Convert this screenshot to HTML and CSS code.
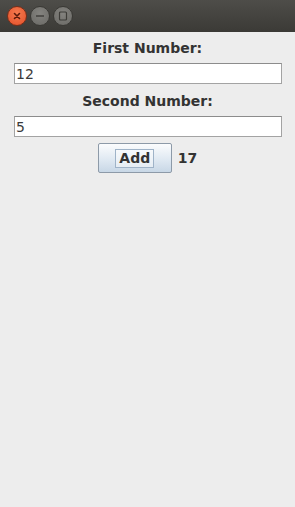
FILE: index.html
```html
<!DOCTYPE html>
<html lang="en">
<head>
  <meta charset="UTF-8" />
  <title>Adder</title>
  <link rel="stylesheet" href="styles.css">
</head>
<body>

  <!-- Window title bar -->
  <div class="titlebar">
    <span class="win-btn close">
      <svg width="8" height="8" viewBox="0 0 8 8"><path d="M1.5 1.5 L6.5 6.5 M6.5 1.5 L1.5 6.5" stroke="#5a1a0a" stroke-width="1.6" stroke-linecap="round"/></svg>
    </span>
    <span class="win-btn">
      <svg width="10" height="10" viewBox="0 0 10 10"><path d="M1 5 H9" stroke="#3d3c38" stroke-width="1.4"/></svg>
    </span>
    <span class="win-btn">
      <svg width="10" height="10" viewBox="0 0 10 10"><rect x="1.5" y="1" width="7" height="8" rx="1" fill="none" stroke="#3d3c38" stroke-width="1.2"/></svg>
    </span>
  </div>

  <!-- Form -->
  <div class="content">
    <div class="label first">First Number:</div>
    <input class="field" type="text" value="12" />
    <div class="label">Second Number:</div>
    <input class="field" type="text" value="5" />
    <div class="actions">
      <button class="add-btn"><span class="focus">Add</span></button>
      <span class="result">17</span>
    </div>
  </div>

</body>
</html>
```

FILE: styles.css
```css
* {
  margin: 0;
  padding: 0;
  box-sizing: border-box;
}

html, body {
  height: 100%;
  background-color: #ededed;
  font-family: 'DejaVu Sans', sans-serif;
  overflow: hidden;
}

/* === TITLE BAR === */
.titlebar {
  height: 32px;
  background: linear-gradient(#4e4d49, #3b3a36);
  display: flex;
  align-items: center;
  padding-left: 7px;
  gap: 3px;
}

.win-btn {
  width: 20px;
  height: 20px;
  border-radius: 50%;
  background: radial-gradient(circle at 50% 35%, #84837f, #6a6965);
  border: 1px solid #3a3935;
  display: flex;
  justify-content: center;
  align-items: center;
}

.win-btn.close {
  background: radial-gradient(circle at 50% 35%, #f47a4e, #e4502a);
  border-color: #7a2e18;
}

/* === FORM === */
.content {
  display: flex;
  flex-direction: column;
  align-items: center;
}

.label {
  font-size: 14px;
  font-weight: bold;
  color: #333333;
  line-height: 16px;
  margin-top: 9px;
  margin-bottom: 7px;
}

.label.first {
  margin-top: 8px;
}

.field {
  width: 268px;
  height: 21px;
  margin-left: 1px;
  border: 1px solid #a3a3a3;
  border-top-color: #8c8c8c;
  background: #fff;
  font-family: 'DejaVu Sans', sans-serif;
  font-size: 14px;
  color: #3a3a3a;
  padding: 0 1px;
  outline: none;
}

.actions {
  display: flex;
  align-items: center;
  gap: 6px;
  margin-top: 6px;
}

.add-btn {
  width: 74px;
  height: 30px;
  border: 1px solid #8d9aa8;
  border-radius: 2px;
  background: linear-gradient(#fbfcfd, #dde7f1 60%, #c8d7e6);
  display: flex;
  justify-content: center;
  align-items: center;
  font-family: 'DejaVu Sans', sans-serif;
  font-size: 14px;
  font-weight: bold;
  color: #333333;
}

.focus {
  border: 1px solid #9fb3c8;
  background: rgba(255, 255, 255, 0.45);
  padding: 1px 3px;
  line-height: 15px;
}

.result {
  font-size: 14px;
  font-weight: bold;
  color: #333333;
}
```
